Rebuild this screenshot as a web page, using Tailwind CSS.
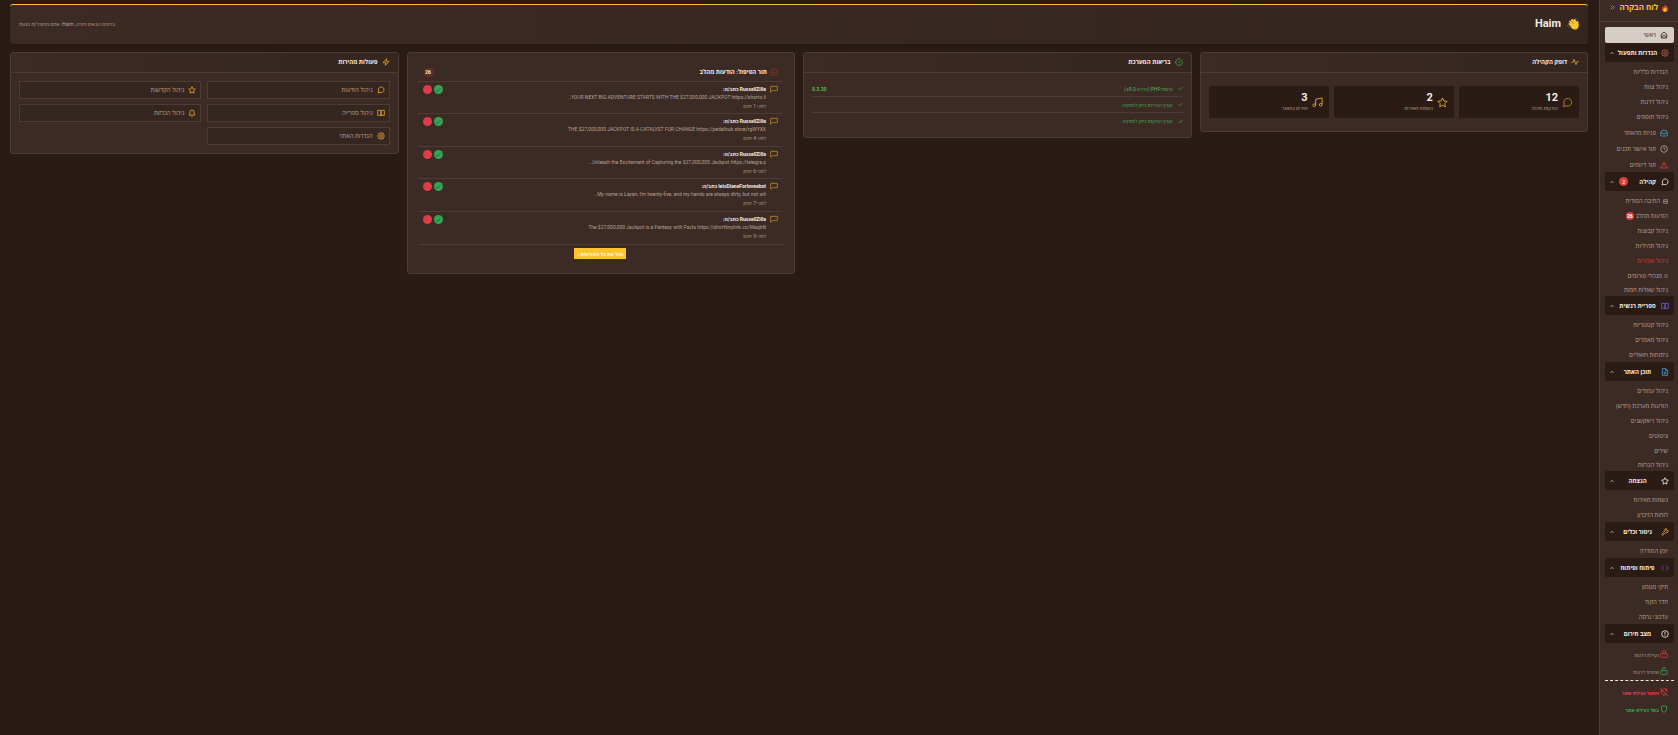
<!DOCTYPE html>
<html lang="he" dir="rtl">
<head>
<meta charset="utf-8">
<meta name="viewport" content="width=device-width, initial-scale=1">
<title>לוח הבקרה</title>
<script src="https://cdn.jsdelivr.net/npm/@tailwindcss/browser@4"></script>
</head>
<body class="flex min-h-screen items-stretch overflow-x-hidden bg-[#2a1b14] font-[Roboto,'Open_Sans','Liberation_Sans',sans-serif] text-[6px] leading-[8px] text-[#b5a394]">

<svg class="hidden" fill="none">
  <symbol id="home" viewBox="0 0 24 24"><path d="M2 12L12 3l10 9M4 10v11h16V10M8 21v-5a4 4 0 0 1 8 0v5"/></symbol>
  <symbol id="gear" viewBox="0 0 24 24"><path d="M12 2l3 2 4 0 1 4 2 4-2 4-1 4h-4l-3 2-3-2H5l-1-4-2-4 2-4 1-4h4z"/><circle cx="12" cy="12" r="4"/></symbol>
  <symbol id="inbox" viewBox="0 0 24 24"><path d="M22 12h-6l-2 3h-4l-2-3H2M6 4h12l4 8v7a2 2 0 0 1-2 2H4a2 2 0 0 1-2-2v-7z"/></symbol>
  <symbol id="clock" viewBox="0 0 24 24"><circle cx="12" cy="12" r="10"/><path d="M12 6v6l4 2"/></symbol>
  <symbol id="warn" viewBox="0 0 24 24"><path d="M12 3L2 21h20zM12 9v5M12 17v1"/></symbol>
  <symbol id="chat" viewBox="0 0 24 24"><path d="M21 11.500a8.500 8.500 0 0 1-12.500 7.500L3 21l2-5.500A8.500 8.500 0 1 1 21 11.500z"/></symbol>
  <symbol id="msg" viewBox="0 0 24 24"><path d="M22 4v13H7l-5 5V4z"/></symbol>
  <symbol id="book" viewBox="0 0 24 24"><path d="M2 4h7a3 3 0 0 1 3 3v14a3 3 0 0 0-3-2H2zM22 4h-7a3 3 0 0 0-3 3v14a3 3 0 0 1 3-2h7z"/></symbol>
  <symbol id="file" viewBox="0 0 24 24"><path d="M14 2H4v20h16V8zM14 2v6h6M8 13h8M8 17h8"/></symbol>
  <symbol id="star" viewBox="0 0 24 24"><path d="M12 2l3 6.500 7 1-5 5 1 7-6-3.500-6 3.500 1-7-5-5 7-1z"/></symbol>
  <symbol id="wrench" viewBox="0 0 24 24"><path d="M15 6a1 1 0 0 0 0 2l2 2 4-4a6 6 0 0 1-8 8l-7 7a2 2 0 0 1-3-3l7-7a6 6 0 0 1 8-8z"/></symbol>
  <symbol id="code" viewBox="0 0 24 24"><path d="M16 19l6-7-6-7M8 5l-6 7 6 7"/></symbol>
  <symbol id="alert" viewBox="0 0 24 24"><circle cx="12" cy="12" r="10"/><path d="M12 6v8M12 16v2"/></symbol>
  <symbol id="lock" viewBox="0 0 24 24"><rect x="2" y="11" width="20" height="11" rx="2"/><path d="M7 11V7a5 5 0 0 1 10 0v4"/></symbol>
  <symbol id="unlock" viewBox="0 0 24 24"><rect x="2" y="11" width="20" height="11" rx="2"/><path d="M7 11V7a5 5 0 0 1 10-1"/></symbol>
  <symbol id="shield" viewBox="0 0 24 24"><path d="M4 4l8-2 8 2v8c0 5-4 8-8 10-4-2-8-5-8-10z"/></symbol>
  <symbol id="shieldoff" viewBox="0 0 24 24"><path d="M9 3h11v9M17 19l-5 3c-4-2-8-5-8-10V5M1 1l22 22"/></symbol>
  <symbol id="pulse" viewBox="0 0 24 24"><path d="M1 13h5l3-9 6 16 3-9h5"/></symbol>
  <symbol id="okc" viewBox="0 0 24 24"><path d="M22 11v1a10 10 0 1 1-6-9M22 4L12 14l-3-3"/></symbol>
  <symbol id="check" viewBox="0 0 24 24"><path d="M21 5L9 18l-6-6"/></symbol>
  <symbol id="music" viewBox="0 0 24 24"><path d="M8 18V5l14-3v14"/><circle cx="5" cy="18" r="3"/><circle cx="19" cy="17" r="3"/></symbol>
  <symbol id="bolt" viewBox="0 0 24 24"><path d="M14 2L3 14h8l-1 8 11-12h-8z"/></symbol>
  <symbol id="bell" viewBox="0 0 24 24"><path d="M18 9A6 6 0 0 0 6 9c0 6-3 9-3 9h18s-3-3-3-9M10 22h4"/></symbol>
  <symbol id="box" viewBox="0 0 24 24"><path d="M3 3h18v18H3zM3 12h18M8 7l8 10"/></symbol>
  <symbol id="hex" viewBox="0 0 24 24"><path d="M5 4h14v16H5z"/></symbol>
  <symbol id="up" viewBox="0 0 24 24"><path d="M3 17l9-9 9 9"/></symbol>
</svg>

<aside class="flex w-[79px] shrink-0 flex-col border-l border-[#4d3b36] bg-[#3c2a25] stroke-current">
  <div class="flex h-[22px] items-center gap-[3px] border-b border-[#4d3b36] pr-[9px] pl-[10px] pb-[6px]">
    <svg class="size-[8px] shrink-0 stroke-none" viewBox="0 0 24 24"><path fill="#e84b2c" d="M11 0c2 6 11 8 10 16-1 5-4 8-9 8s-9-3-9-8c0-4 2-6 3-9l3 4c2-3 3-7 2-11z"/><path fill="#ffc928" d="M13 9c1 4 4 5 4 9 0 3-2 5-5 5s-5-2-5-5 3-3 3-6l2 2z"/></svg>
    <h1 class="grow whitespace-nowrap text-[8px] leading-[10px] font-bold text-[#fbc42c]">לוח הבקרה</h1>
    <button class="shrink-0" aria-label="כיווץ תפריט"><svg class="size-[5px] fill-none stroke-[3]" viewBox="0 0 24 24"><path d="M3 3l9 9-9 9M13 3l9 9-9 9"/></svg></button>
  </div>
  <nav class="flex flex-col whitespace-nowrap fill-none stroke-[2.5] pr-[4px] pl-[5px] pt-[5px]">
    <a href="#" class="flex h-[16px] items-center gap-[4px] rounded-[2px] bg-[#d6cdc6] px-[6px] font-medium text-[#3c2a25]"><svg class="size-[8px]"><use href="#home"/></svg>ראשי</a>

    <button class="flex h-[19px] items-center justify-between rounded-[2px] bg-[#2a1b14] px-[5px] font-bold text-[#f5ece4]"><svg class="size-[8px] text-[#b55f4c]"><use href="#gear"/></svg>הגדרות ותפעול<svg class="size-[4px] stroke-[4]"><use href="#up"/></svg></button>
    <ul class="flex flex-col gap-px px-[6px] pt-[3px]">
      <li><a href="#" class="flex h-[14px] items-center">הגדרות כלליות</a></li>
      <li><a href="#" class="flex h-[14px] items-center">ניהול צוות</a></li>
      <li><a href="#" class="flex h-[14px] items-center">ניהול דרגות</a></li>
      <li><a href="#" class="flex h-[14px] items-center">ניהול תוספים</a></li>
      <li><a href="#" class="flex h-[15px] items-center gap-[4px]"><svg class="size-[8px] text-[#3d9fd6]"><use href="#inbox"/></svg>פניות מהאתר</a></li>
      <li><a href="#" class="flex h-[15px] items-center gap-[4px]"><svg class="size-[8px]"><use href="#clock"/></svg>תור אישור תכנים</a></li>
      <li><a href="#" class="flex h-[15px] items-center gap-[4px]"><svg class="size-[8px] text-[#dc3a3a]"><use href="#warn"/></svg>תור דיווחים</a></li>
    </ul>

    <button class="flex h-[19px] items-center justify-between rounded-[2px] bg-[#2a1b14] px-[5px] font-bold text-[#f5ece4]"><svg class="size-[8px]"><use href="#chat"/></svg>קהילה<span class="mr-[6px] flex size-[9px] items-center justify-center rounded-full bg-[#e03b47] text-[5px] text-[#ffe27a]">2</span><svg class="size-[4px] stroke-[4]"><use href="#up"/></svg></button>
    <ul class="flex flex-col gap-px px-[6px] pt-[3px]">
      <li><a href="#" class="flex h-[14px] items-center gap-[3px]"><svg class="size-[5px] stroke-[3]"><use href="#box"/></svg>התיבה הסודית</a></li>
      <li><a href="#" class="flex h-[14px] items-center gap-[2px]">הודעות מהלב<span class="flex size-[8px] items-center justify-center rounded-full bg-[#e03b47] text-[5px] font-bold text-white">26</span></a></li>
      <li><a href="#" class="flex h-[14px] items-center">ניהול קבוצות</a></li>
      <li><a href="#" class="flex h-[14px] items-center">ניהול תהיליות</a></li>
      <li><a href="#" class="flex h-[14px] items-center text-[#d83b3b]">ניהול אזהרות</a></li>
      <li><a href="#" class="flex h-[13px] items-center gap-[2px]"><svg class="size-[4px] stroke-[3]"><use href="#hex"/></svg>מנהלי פורומים</a></li>
      <li><a href="#" class="flex h-[13px] items-center">ניהול שאלות חמות</a></li>
    </ul>

    <button class="flex h-[19px] items-center justify-between rounded-[2px] bg-[#2a1b14] px-[5px] font-bold text-[#f5ece4]"><svg class="size-[8px] text-[#6a5bd0]"><use href="#book"/></svg>ספריית רגשית<svg class="size-[4px] stroke-[4]"><use href="#up"/></svg></button>
    <ul class="flex flex-col gap-px px-[6px] pt-[3px]">
      <li><a href="#" class="flex h-[14px] items-center">ניהול קטגוריות</a></li>
      <li><a href="#" class="flex h-[14px] items-center">ניהול מאמרים</a></li>
      <li><a href="#" class="flex h-[14px] items-center">ניתוחות ויזואליים</a></li>
    </ul>

    <button class="flex h-[19px] items-center justify-between rounded-[2px] bg-[#2a1b14] px-[5px] font-bold text-[#f5ece4]"><svg class="size-[8px] text-[#3d9fd6]"><use href="#file"/></svg>תוכן האתר<svg class="size-[4px] stroke-[4]"><use href="#up"/></svg></button>
    <ul class="flex flex-col gap-px px-[6px] pt-[3px]">
      <li><a href="#" class="flex h-[14px] items-center">ניהול עמודים</a></li>
      <li><a href="#" class="flex h-[14px] items-center">הודעות מערכת (חדש)</a></li>
      <li><a href="#" class="flex h-[14px] items-center">ניהול ריאקשנים</a></li>
      <li><a href="#" class="flex h-[14px] items-center">ציטוטים</a></li>
      <li><a href="#" class="flex h-[13px] items-center">שירים</a></li>
      <li><a href="#" class="flex h-[13px] items-center">ניהול הכרזות</a></li>
    </ul>

    <button class="flex h-[19px] items-center justify-between rounded-[2px] bg-[#2a1b14] px-[5px] font-bold text-[#f5ece4]"><svg class="size-[8px]"><use href="#star"/></svg>הנצחה<svg class="size-[4px] stroke-[4]"><use href="#up"/></svg></button>
    <ul class="flex flex-col gap-px px-[6px] pt-[3px]">
      <li><a href="#" class="flex h-[14px] items-center">נשמות מאירות</a></li>
      <li><a href="#" class="flex h-[14px] items-center">לוחות הזיכרון</a></li>
    </ul>

    <button class="flex h-[19px] items-center justify-between rounded-[2px] bg-[#2a1b14] px-[5px] font-bold text-[#f5ece4]"><svg class="size-[8px] text-[#eba42c]"><use href="#wrench"/></svg>ניטור וכלים<svg class="size-[4px] stroke-[4]"><use href="#up"/></svg></button>
    <ul class="flex flex-col gap-px px-[6px] pt-[3px]">
      <li><a href="#" class="flex h-[14px] items-center">יומן המודרה</a></li>
    </ul>

    <button class="flex h-[19px] items-center justify-between rounded-[2px] bg-[#2a1b14] px-[5px] font-bold text-[#f5ece4]"><svg class="size-[8px] text-[#6a5bd0]"><use href="#code"/></svg>פיתוח ופיתוח<svg class="size-[4px] stroke-[4]"><use href="#up"/></svg></button>
    <ul class="flex flex-col gap-px px-[6px] pt-[3px]">
      <li><a href="#" class="flex h-[14px] items-center">תיקי מטמון</a></li>
      <li><a href="#" class="flex h-[14px] items-center">חדר הקוד</a></li>
      <li><a href="#" class="flex h-[14px] items-center">עדכוני גרסה</a></li>
    </ul>

    <button class="flex h-[19px] items-center justify-between rounded-[2px] bg-[#2a1b14] px-[5px] font-bold text-[#f5ece4]"><svg class="size-[8px]"><use href="#alert"/></svg>מצב חירום<svg class="size-[4px] stroke-[4]"><use href="#up"/></svg></button>
    <ul class="flex flex-col pt-[2px] text-[5px]">
      <li><a href="#" class="flex h-[17px] items-center gap-px px-[6px]"><svg class="size-[8px] text-[#dc3a3a]"><use href="#lock"/></svg><span class="pt-[3px]">נעילת דרגות</span></a></li>
      <li><a href="#" class="flex h-[17px] items-center gap-px px-[6px]"><svg class="size-[8px] text-[#2fae54]"><use href="#unlock"/></svg><span class="pt-[3px]">שחרור דרגות</span></a></li>
      <li class="mt-px border-t border-dashed border-[#f5ece4] pt-[2px]"><a href="#" class="flex h-[17px] items-center gap-px px-[6px] font-bold text-[#f0404a]"><svg class="size-[8px]"><use href="#shieldoff"/></svg><span class="pt-[3px]">הפעל נעילת אתר</span></a></li>
      <li><a href="#" class="flex h-[17px] items-center gap-px px-[6px] font-bold text-[#2fae54]"><svg class="size-[8px]"><use href="#shield"/></svg><span class="pt-[3px]">בטל נעילת אתר</span></a></li>
    </ul>
  </nav>
</aside>

<main class="min-w-0 grow px-[10px] pt-[4px] pr-[11px]">
  <header class="flex h-[40px] items-center justify-between rounded-[3px] border-t border-[#fbc42c] bg-linear-to-l from-[#35261f] to-[#3c2a25] px-[9px] pb-px shadow">
    <h2 class="flex items-center gap-[6px] text-[11px] leading-[14px] font-bold text-[#f5ece4]">
      <svg class="size-[12px]" viewBox="0 0 24 24"><g stroke="#fbc42c" stroke-linecap="round" stroke-width="4"><path d="M5 12l7 6M6 7l8 8M10 4l7 8M15 4l4 7M21 8v6"/></g><path fill="#fbc42c" d="M10 14l10-6 3 5c1 6-2 10-7 10-4 0-7-3-9-5z"/><path stroke="#4a6478" stroke-width="2" fill="none" d="M16 1q4 0 5 3M1 14q0 4 3 5"/></svg>
      Haim
    </h2>
    <p class="pb-px text-[5px]">ברוכים הבאים חזרה, Haim. אתם מחובר/ת כצוות</p>
  </header>

  <div class="mt-[8px] grid grid-cols-4 items-start gap-[8px] fill-none stroke-current stroke-[2.5]">
    <section class="rounded-[3px] border border-[#4d3b36] bg-[#3c2a25]">
      <h3 class="flex h-[20px] items-center gap-[4px] border-b border-[#4d3b36] bg-linear-to-l from-[#35261f] to-[#3c2a25] px-[8px] pb-px font-bold text-[#f5ece4]"><svg class="size-[8px] text-[#eba42c]"><use href="#pulse"/></svg>דופק הקהילה</h3>
      <div class="grid grid-cols-3 gap-[5px] px-[8px] py-[13px] text-[5px] stroke-2">
        <div class="flex h-[32px] items-center gap-[4px] rounded-[2px] bg-[#2a1b14] px-[6px]"><svg class="size-[11px] text-[#b98529]"><use href="#chat"/></svg><div><div class="text-[11px] leading-[12px] font-bold text-[#f5ece4]">12</div><div>הודעות מהלב</div></div></div>
        <div class="flex h-[32px] items-center gap-[4px] rounded-[2px] bg-[#2a1b14] px-[6px]"><svg class="size-[11px] text-[#eba42c]"><use href="#star"/></svg><div><div class="text-[11px] leading-[12px] font-bold text-[#f5ece4]">2</div><div>נשמות מאירות</div></div></div>
        <div class="flex h-[32px] items-center gap-[4px] rounded-[2px] bg-[#2a1b14] px-[6px]"><svg class="size-[11px] text-[#eba42c]"><use href="#music"/></svg><div><div class="text-[11px] leading-[12px] font-bold text-[#f5ece4]">3</div><div>שירים במאגר</div></div></div>
      </div>
    </section>

    <section class="rounded-[3px] border border-[#4d3b36] bg-[#3c2a25]">
      <h3 class="flex h-[20px] items-center gap-[4px] border-b border-[#4d3b36] bg-linear-to-l from-[#35261f] to-[#3c2a25] px-[8px] pb-px font-bold text-[#f5ece4]"><svg class="size-[8px] text-[#4aa552]"><use href="#okc"/></svg>בריאות המערכת</h3>
      <ul class="divide-y divide-[#4d3b36] px-[8px] py-[8px] text-[5px] text-[#4fb558]">
        <li class="flex h-[16px] items-center gap-[5px]"><svg class="size-[5px] stroke-[3]"><use href="#check"/></svg><span class="grow">גרסת PHP (נדרש 8.0+)</span><span class="font-bold">8.3.30</span></li>
        <li class="flex h-[16px] items-center gap-[5px]"><svg class="size-[5px] stroke-[3]"><use href="#check"/></svg>קובץ הגדרות ניתן לכתיבה</li>
        <li class="flex h-[16px] items-center gap-[5px]"><svg class="size-[5px] stroke-[3]"><use href="#check"/></svg>קובץ הודעות ניתן לכתיבה</li>
      </ul>
    </section>

    <section class="rounded-[3px] border border-[#4d3b36] bg-[#3c2a25] pr-[11px] pl-[10px] pt-[10px] pb-[14px]">
      <h3 class="flex h-[19px] items-center gap-[3px] border-b border-[#4d3b36] px-[5px] font-bold text-[#f5ece4]"><svg class="size-[8px] text-[#7a3a2a]"><use href="#inbox"/></svg><span class="grow">תור הטיפול: הודעות מהלב</span><span class="flex h-[9px] w-[11px] items-center justify-center rounded-full bg-[#5e2f20] text-[5px] text-[#fff0c0]">26</span></h3>
      <ul class="text-[5px]">
        <li class="flex h-[32px] gap-[4px] border-b border-[#4d3b36] px-[5px] pt-[3px]"><svg class="size-[8px] shrink-0 text-[#b98529]"><use href="#msg"/></svg><div class="min-w-0 grow"><p class="font-bold text-[#f5ece4]"><bdi>RussellZilla</bdi> כתב/ה:</p><p class="truncate">YOUR NEXT BIG ADVENTURE STARTS WITH THE $27,000,000 JACKPOT https://shorto.li...</p><p class="pt-px">לפני 1 ימים</p></div><span class="flex gap-[2px]"><button class="flex size-[9px] items-center justify-center rounded-full bg-[#2fa84f] text-[#4a4a90]" aria-label="אישור"><svg class="size-[6px] stroke-[4]"><use href="#check"/></svg></button><button class="size-[9px] rounded-full bg-[#e03b47]" aria-label="מחיקה"></button></span></li>
        <li class="flex h-[33px] gap-[4px] border-b border-[#4d3b36] px-[5px] pt-[3px]"><svg class="size-[8px] shrink-0 text-[#b98529]"><use href="#msg"/></svg><div class="min-w-0 grow"><p class="font-bold text-[#f5ece4]"><bdi>RussellZilla</bdi> כתב/ה:</p><p class="truncate">THE $27,000,000 JACKPOT IS A CATALYST FOR CHANGE https://pedalhub.store/rgWYXX</p><p class="pt-px">לפני 4 ימים</p></div><span class="flex gap-[2px]"><button class="flex size-[9px] items-center justify-center rounded-full bg-[#2fa84f] text-[#4a4a90]" aria-label="אישור"><svg class="size-[6px] stroke-[4]"><use href="#check"/></svg></button><button class="size-[9px] rounded-full bg-[#e03b47]" aria-label="מחיקה"></button></span></li>
        <li class="flex h-[32px] gap-[4px] border-b border-[#4d3b36] px-[5px] pt-[3px]"><svg class="size-[8px] shrink-0 text-[#b98529]"><use href="#msg"/></svg><div class="min-w-0 grow"><p class="font-bold text-[#f5ece4]"><bdi>RussellZilla</bdi> כתב/ה:</p><p class="truncate">Unleash the Excitement of Capturing the $27,000,000 Jackpot https://telegra.p...</p><p class="pt-px">לפני 6 ימים</p></div><span class="flex gap-[2px]"><button class="flex size-[9px] items-center justify-center rounded-full bg-[#2fa84f] text-[#4a4a90]" aria-label="אישור"><svg class="size-[6px] stroke-[4]"><use href="#check"/></svg></button><button class="size-[9px] rounded-full bg-[#e03b47]" aria-label="מחיקה"></button></span></li>
        <li class="flex h-[33px] gap-[4px] border-b border-[#4d3b36] px-[5px] pt-[3px]"><svg class="size-[8px] shrink-0 text-[#b98529]"><use href="#msg"/></svg><div class="min-w-0 grow"><p class="font-bold text-[#f5ece4]"><bdi>letsDianeForloveabot</bdi> כתב/ה:</p><p class="truncate">My name is Layan, I'm twenty-five, and my hands are always dirty, but not wit...</p><p class="pt-px">לפני 7 ימים</p></div><span class="flex gap-[2px]"><button class="flex size-[9px] items-center justify-center rounded-full bg-[#2fa84f] text-[#4a4a90]" aria-label="אישור"><svg class="size-[6px] stroke-[4]"><use href="#check"/></svg></button><button class="size-[9px] rounded-full bg-[#e03b47]" aria-label="מחיקה"></button></span></li>
        <li class="flex h-[33px] gap-[4px] border-b border-[#4d3b36] px-[5px] pt-[3px]"><svg class="size-[8px] shrink-0 text-[#b98529]"><use href="#msg"/></svg><div class="min-w-0 grow"><p class="font-bold text-[#f5ece4]"><bdi>RussellZilla</bdi> כתב/ה:</p><p class="truncate">The $27,000,000 Jackpot is a Fantasy with Facts https://shorttinylink.co/MaqbN</p><p class="pt-px">לפני 9 ימים</p></div><span class="flex gap-[2px]"><button class="flex size-[9px] items-center justify-center rounded-full bg-[#2fa84f] text-[#4a4a90]" aria-label="אישור"><svg class="size-[6px] stroke-[4]"><use href="#check"/></svg></button><button class="size-[9px] rounded-full bg-[#e03b47]" aria-label="מחיקה"></button></span></li>
      </ul>
      <a href="#" class="mx-auto mt-[3px] flex h-[11px] w-fit items-center bg-[#fbc42c] px-[3px] text-[5px] font-bold text-[#fff6e0]">נהל את כל ההודעות ›</a>
    </section>

    <section class="rounded-[3px] border border-[#4d3b36] bg-[#3c2a25]">
      <h3 class="flex h-[20px] items-center gap-[4px] border-b border-[#4d3b36] bg-linear-to-l from-[#35261f] to-[#3c2a25] px-[8px] pb-px font-bold text-[#f5ece4]"><svg class="size-[8px] text-[#eba42c]"><use href="#bolt"/></svg>פעולות מהירות</h3>
      <div class="grid grid-cols-2 gap-x-[6px] gap-y-[5px] p-[8px]">
        <a href="#" class="flex h-[18px] items-center gap-[4px] border border-[#4d3b36] bg-[#35261f] px-[4px]"><svg class="size-[8px] text-[#eba42c]"><use href="#chat"/></svg>ניהול הודעות</a>
        <a href="#" class="flex h-[18px] items-center gap-[4px] border border-[#4d3b36] bg-[#35261f] px-[4px]"><svg class="size-[8px] text-[#eba42c]"><use href="#star"/></svg>ניהול הקדשות</a>
        <a href="#" class="flex h-[18px] items-center gap-[4px] border border-[#4d3b36] bg-[#35261f] px-[4px]"><svg class="size-[8px] text-[#eba42c]"><use href="#book"/></svg>ניהול ספרייה</a>
        <a href="#" class="flex h-[18px] items-center gap-[4px] border border-[#4d3b36] bg-[#35261f] px-[4px]"><svg class="size-[8px] text-[#eba42c]"><use href="#bell"/></svg>ניהול הכרזות</a>
        <a href="#" class="flex h-[18px] items-center gap-[4px] border border-[#4d3b36] bg-[#35261f] px-[4px]"><svg class="size-[8px] text-[#eba42c]"><use href="#gear"/></svg>הגדרות האתר</a>
      </div>
    </section>
  </div>
</main>
</body>
</html>
